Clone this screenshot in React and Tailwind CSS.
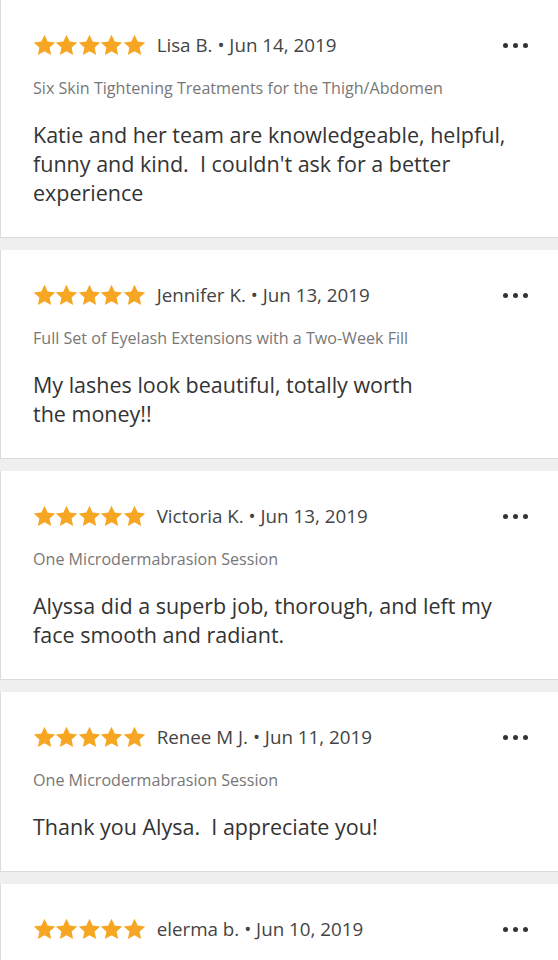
import React from 'react';

const reviews = [
  {
    name: 'Lisa B.',
    date: 'Jun 14, 2019',
    service: 'Six Skin Tightening Treatments for the Thigh/Abdomen',
    lines: ['Katie and her team are knowledgeable, helpful,', "funny and kind.\u00a0 I couldn't ask for a better", 'experience'],
  },
  {
    name: 'Jennifer K.',
    date: 'Jun 13, 2019',
    service: 'Full Set of Eyelash Extensions with a Two-Week Fill',
    lines: ['My lashes look beautiful, totally worth', 'the money!!'],
  },
  {
    name: 'Victoria K.',
    date: 'Jun 13, 2019',
    service: 'One Microdermabrasion Session',
    lines: ['Alyssa did a superb job, thorough, and left my', 'face smooth and radiant.'],
  },
  {
    name: 'Renee M J.',
    date: 'Jun 11, 2019',
    service: 'One Microdermabrasion Session',
    lines: ['Thank you Alysa.\u00a0 I appreciate you!'],
  },
  {
    name: 'elerma b.',
    date: 'Jun 10, 2019',
  },
];

function Star() {
  return (
    <svg width="23" height="22" viewBox="0 0 24 23" className="shrink-0">
      <path
        d="M12 0.7 L15.29 7.97 L23.22 8.85 L17.33 14.23 L18.94 22.05 L12 18.1 L5.06 22.05 L6.67 14.23 L0.78 8.85 L8.71 7.97 Z"
        fill="#f6a623"
      />
    </svg>
  );
}

function Review({ r }) {
  return (
    <div className="bg-white border-l border-b border-[#dcdcdc] pl-[32px] pr-[30px] pt-[34px] pb-[30px] shrink-0">
      <div className="flex items-center h-[22px]">
        <div className="flex -space-x-[0.6px]">
          {[0, 1, 2, 3, 4].map((i) => <Star key={i} />)}
        </div>
        <span className="ml-[11px] text-[18.8px] text-[#444]">
          {r.name} • {r.date}
        </span>
        <div className="ml-auto flex gap-[5px]">
          <span className="w-[5px] h-[5px] rounded-full bg-[#333]" />
          <span className="w-[5px] h-[5px] rounded-full bg-[#333]" />
          <span className="w-[5px] h-[5px] rounded-full bg-[#333]" />
        </div>
      </div>
      {r.service && (
        <>
          <div className="mt-[21px] text-[16.1px] leading-[22px] text-[#777]">{r.service}</div>
          <div className="mt-[21px] text-[21.5px] leading-[29px] text-[#333]">
            {r.lines.map((l, i) => (
              <div key={i} className="whitespace-nowrap">{l}</div>
            ))}
          </div>
        </>
      )}
    </div>
  );
}

export default function App() {
  return (
    <div
      className="w-[558px] h-[960px] overflow-hidden bg-[#efefef] flex flex-col gap-[12px]"
      style={{ fontFamily: '"Open Sans", sans-serif' }}
    >
      {reviews.map((r) => (
        <Review key={r.name} r={r} />
      ))}
    </div>
  );
}
